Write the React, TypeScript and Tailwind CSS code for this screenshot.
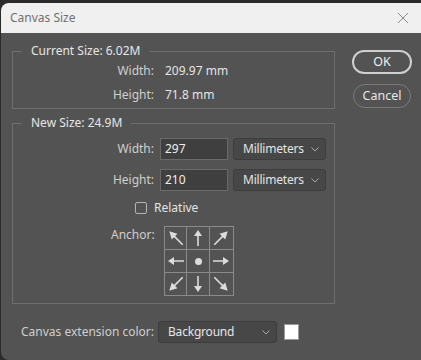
import React from 'react';

const font = { fontFamily: '"Noto Sans", "Open Sans", Arial, sans-serif' };

function Chevron() {
  return (
    <svg width="8" height="5" viewBox="0 0 8 5" className="shrink-0">
      <path d="M0.5 0.5 L4 4 L7.5 0.5" fill="none" stroke="#a8a8a8" strokeWidth="1" />
    </svg>
  );
}

function Select({ value, className = '' }: { value: string; className?: string }) {
  return (
    <div
      className={`flex items-center justify-between h-[22px] rounded-[3px] border border-[#3d3d3d] bg-[#474747] pl-[9px] pr-[6px] text-[12px] text-[#e4e4e4] ${className}`}
    >
      <span className="tracking-[-0.2px]">{value}</span>
      <Chevron />
    </div>
  );
}

function Arrow({ angle }: { angle: number }) {
  const diag = angle % 90 !== 0;
  const len = diag ? 9.5 : 8;
  return (
    <svg width="20" height="20" viewBox="-10 -10 20 20" style={{ transform: `rotate(${angle}deg)` }}>
      <line x1="0" y1={len} x2="0" y2="-3" stroke="#dcdcdc" strokeWidth="1.6" />
      <path d={`M-4 -2 L0 ${-len} L4 -2 Z`} fill="#dcdcdc" />
    </svg>
  );
}

function AnchorGrid() {
  const cells: (number | null)[] = [-45, 0, 45, -90, null, 90, -135, 180, 135];
  return (
    <div className="grid grid-cols-3 w-[70px] h-[70px] border border-[#8a8a8a]">
      {cells.map((a, i) => (
        <div
          key={i}
          className={`flex items-center justify-center border-[#8a8a8a] ${i % 3 !== 2 ? 'border-r' : ''} ${i < 6 ? 'border-b' : ''}`}
        >
          {a === null ? <div className="w-[7px] h-[7px] rounded-full bg-[#dcdcdc]" /> : <Arrow angle={a} />}
        </div>
      ))}
    </div>
  );
}

export default function App() {
  return (
    <div className="w-[421px] h-[360px] bg-[#2b2b2b] pt-[3px] pl-[1px]" style={font}>
      <div className="h-full flex flex-col rounded-tl-[8px] rounded-bl-[8px] overflow-hidden bg-[#535353]">
        {/* title bar */}
        <div className="h-[30px] shrink-0 bg-[#f0f0f0] flex items-center justify-between pl-[9px] pr-[12px]">
          <span className="text-[12px] text-[#707070]">Canvas Size</span>
          <svg width="12" height="12" viewBox="0 0 12 12">
            <path d="M1 1 L11 11 M11 1 L1 11" stroke="#8a8a8a" strokeWidth="1" />
          </svg>
        </div>

        <div className="flex pt-[11px] pl-[11px]">
          <div className="w-[323px] flex flex-col gap-[7px]">
            {/* current size */}
            <fieldset className="border border-[#6e6e6e] h-[65px] px-0">
              <legend className="ml-[9px] px-[9px] text-[12px] text-[#e6e6e6] leading-[14px]">Current Size: 6.02M</legend>
              <div className="flex flex-col gap-[7px] pt-[4px] text-[12px]">
                <div className="flex items-center h-[17px]">
                  <span className="w-[141px] text-right text-[#cfcfcf]">Width:</span>
                  <span className="ml-[11px] text-[#e4e4e4]">209.97 mm</span>
                </div>
                <div className="flex items-center h-[17px]">
                  <span className="w-[141px] text-right text-[#cfcfcf]">Height:</span>
                  <span className="ml-[11px] text-[#e4e4e4]">71.8 mm</span>
                </div>
              </div>
            </fieldset>

            {/* new size */}
            <fieldset className="border border-[#6e6e6e] h-[188px]">
              <legend className="ml-[9px] px-[9px] text-[12px] text-[#e6e6e6] leading-[14px]">New Size: 24.9M</legend>
              <div className="flex flex-col pt-[8px] text-[12px]">
                <div className="flex items-center h-[22px]">
                  <span className="w-[141px] text-right text-[#cfcfcf]">Width:</span>
                  <div className="ml-[6px] w-[68px] h-[22px] bg-[#3f3f3f] border border-[#6a6a6a] pl-[4px] flex items-center text-[#eeeeee]">297</div>
                  <Select value="Millimeters" className="ml-[5px] w-[93px]" />
                </div>
                <div className="flex items-center h-[22px] mt-[9px]">
                  <span className="w-[141px] text-right text-[#cfcfcf]">Height:</span>
                  <div className="ml-[6px] w-[68px] h-[22px] bg-[#3f3f3f] border border-[#6a6a6a] pl-[4px] flex items-center text-[#eeeeee]">210</div>
                  <Select value="Millimeters" className="ml-[5px] w-[93px]" />
                </div>
                <div className="flex items-center mt-[8px] pl-[122px]">
                  <div className="w-[12px] h-[12px] rounded-[2px] border border-[#b4b4b4]" />
                  <span className="ml-[7px] text-[#e4e4e4]">Relative</span>
                </div>
                <div className="flex items-start mt-[10px] pl-[98px]">
                  <span className="text-[#cfcfcf] leading-[16px]">Anchor:</span>
                  <div className="ml-[9px] mt-[-1px]">
                    <AnchorGrid />
                  </div>
                </div>
              </div>
            </fieldset>
          </div>

          {/* buttons */}
          <div className="flex flex-col items-center gap-[10px] ml-[17px] pt-[6px]">
            <div className="w-[60px] h-[24px] rounded-full border-2 border-[#cfcfcf] flex items-center justify-center text-[12.5px] text-[#f0f0f0]">OK</div>
            <div className="w-[58px] h-[24px] rounded-full border border-[#7a7a7a] flex items-center justify-center text-[12.5px] text-[#e6e6e6]">Cancel</div>
          </div>
        </div>

        {/* bottom row */}
        <div className="flex items-center mt-[17px] pl-[20px] text-[12px]">
          <span className="w-[132px] text-[#cfcfcf] whitespace-nowrap">Canvas extension color:</span>
          <Select value="Background" className="ml-[5px] w-[119px] text-[#e6e6e6]" />
          <div className="ml-[7px] w-[15px] h-[16px] bg-white border border-[#9a9a9a]" />
        </div>
      </div>
    </div>
  );
}
